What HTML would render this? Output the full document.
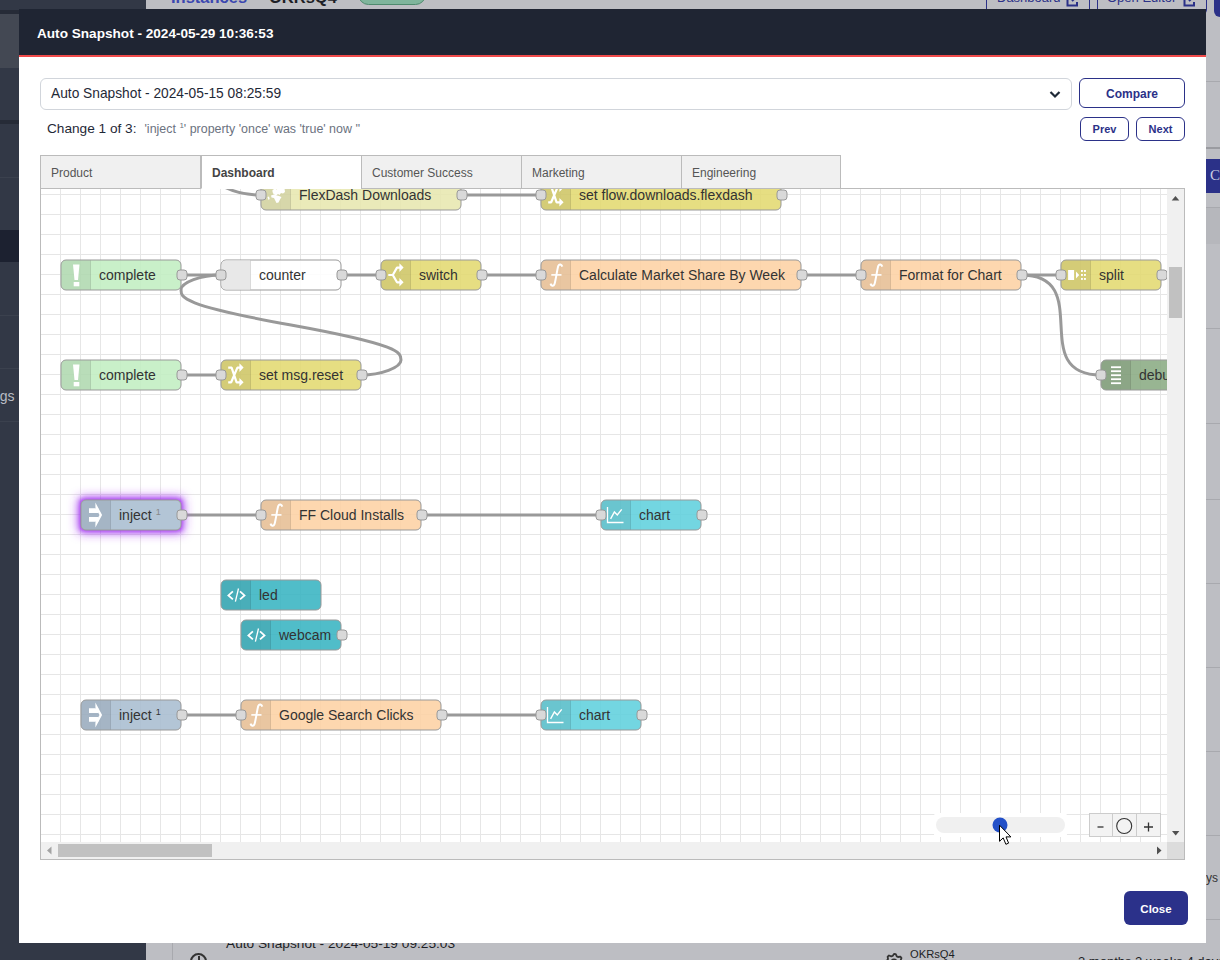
<!DOCTYPE html>
<html><head><meta charset="utf-8">
<style>
html,body{margin:0;padding:0;}
body{width:1220px;height:960px;overflow:hidden;position:relative;background:#bdbec3;font-family:"Liberation Sans",sans-serif;}
.a{position:absolute;}
.nw{white-space:nowrap;}
.btn{position:absolute;box-sizing:border-box;border:1px solid #2b3188;border-radius:6px;background:#fff;color:#2b3188;font-weight:bold;text-align:center;}
.tab{position:absolute;top:155px;height:34px;box-sizing:border-box;width:161px;border:1px solid #bbb;background:#f0f0f0;color:#555;font-size:12px;padding-left:10px;line-height:34px;}
</style></head><body>

<!-- ===== background page (dimmed) ===== -->
<!-- sidebar -->
<div class="a" style="left:0;top:0;width:146px;height:960px;background:#323846;"></div>
<div class="a" style="left:0;top:10px;width:146px;height:4px;background:#262b37;"></div>
<div class="a" style="left:0;top:14px;width:146px;height:54px;background:#434853;"></div>
<div class="a" style="left:0;top:120px;width:146px;height:4px;background:#262b37;"></div>
<div class="a" style="left:0;top:177px;width:146px;height:1px;background:#3b414e;"></div>
<div class="a" style="left:0;top:230px;width:146px;height:32px;background:#1c2130;"></div>
<div class="a" style="left:0;top:315px;width:146px;height:1px;background:#3b414e;"></div>
<div class="a" style="left:0;top:368px;width:146px;height:1px;background:#3b414e;"></div>
<div class="a" style="left:0;top:421px;width:146px;height:1px;background:#3b414e;"></div>
<div class="a nw" style="left:-36px;top:388px;font-size:14px;color:#b9bcc4;">Settings</div>

<!-- top strip -->
<div class="a nw" style="left:171px;top:-12px;font-size:16.5px;font-weight:bold;color:#3a47b0;">Instances</div>
<div class="a nw" style="left:269px;top:-12px;font-size:16.5px;font-weight:bold;color:#1d1f26;">OKRsQ4</div>
<div class="a" style="left:358px;top:-16px;width:68px;height:21px;border-radius:11px;background:#7fb59c;border:1px solid #4f8a6e;box-sizing:border-box;"></div>
<div class="a" style="left:986px;top:-20px;width:104px;height:40px;box-sizing:border-box;border:1px solid #2b3188;border-radius:4px;"></div>
<div class="a nw" style="left:997px;top:-10px;font-size:13px;color:#2b3188;">Dashboard</div>
<svg class="a" style="left:1066px;top:-6px" width="12" height="13"><path d="M5 1.5 H1.5 V11.5 H11 V8" fill="none" stroke="#2b3188" stroke-width="2"/><path d="M6 7 L11 2 M7.5 1.5 H11.5 V5" fill="none" stroke="#2b3188" stroke-width="2"/></svg>
<div class="a" style="left:1097px;top:-20px;width:110px;height:34px;box-sizing:border-box;border:1px solid #2b3188;border-radius:4px;"></div>
<div class="a nw" style="left:1107px;top:-10px;font-size:13px;color:#2b3188;">Open Editor</div>
<svg class="a" style="left:1183px;top:-6px" width="12" height="13"><path d="M5 1.5 H1.5 V11.5 H11 V8" fill="none" stroke="#2b3188" stroke-width="2"/><path d="M6 7 L11 2 M7.5 1.5 H11.5 V5" fill="none" stroke="#2b3188" stroke-width="2"/></svg>
<div class="a" style="left:1214px;top:-10px;width:20px;height:26.5px;border-radius:6px;background:#2b3188;"></div>

<!-- right strip -->
<div class="a" style="left:1206px;top:81px;width:14px;height:1px;background:#a8a9ae;"></div>
<div class="a" style="left:1206px;top:147px;width:14px;height:2px;background:#9a9ba0;"></div>
<div class="a" style="left:1206px;top:159px;width:14px;height:34px;background:#2b3188;"></div>
<div class="a nw" style="left:1210px;top:167px;font-size:15px;font-family:'Liberation Serif',serif;color:#c9cce0;">C</div>
<div class="a" style="left:1206px;top:207px;width:14px;height:36px;background:#b6b7bc;border-top:1px solid #a8a9ae;"></div>
<div class="a" style="left:1206px;top:328px;width:14px;height:1px;background:#a8a9ae;"></div>
<div class="a" style="left:1206px;top:423px;width:14px;height:1px;background:#a8a9ae;"></div>
<div class="a" style="left:1206px;top:919px;width:14px;height:1px;background:#a8a9ae;"></div>
<div class="a nw" style="left:1206px;top:870.5px;font-size:12px;color:#333;">ys</div>
<div class="a" style="left:1206px;top:499px;width:14px;height:1px;background:#a8a9ae;"></div>
<div class="a" style="left:1206px;top:583px;width:14px;height:1px;background:#a8a9ae;"></div>
<div class="a" style="left:1206px;top:667px;width:14px;height:1px;background:#a8a9ae;"></div>
<div class="a" style="left:1206px;top:751px;width:14px;height:1px;background:#a8a9ae;"></div>
<div class="a" style="left:1206px;top:835px;width:14px;height:1px;background:#a8a9ae;"></div>


<!-- bottom strip -->
<div class="a" style="left:172px;top:943px;width:1px;height:17px;background:#a8a9ae;"></div>
<div class="a nw" style="left:226px;top:935.5px;font-size:13.7px;color:#1d1f26;">Auto Snapshot - 2024-05-19 09:25:03</div>
<div class="a" style="left:190px;top:953px;width:17px;height:17px;border-radius:50%;border:2px solid #333;box-sizing:border-box;"></div>
<div class="a" style="left:197.5px;top:956px;width:2px;height:5px;background:#333;"></div>
<div class="a nw" style="left:910px;top:948px;font-size:11.2px;color:#1d1f26;">OKRsQ4</div>
<svg class="a" style="left:884px;top:953px" width="20" height="20"><path d="M10.00 1.00 L11.76 1.17 L12.76 3.35 L14.00 4.01 L16.36 3.64 L17.48 5.00 L16.65 7.24 L17.06 8.60 L19.00 10.00 L18.83 11.76 L16.65 12.76 L15.99 14.00 L16.36 16.36 L15.00 17.48 L12.76 16.65 L11.40 17.06 L10.00 19.00 L8.24 18.83 L7.24 16.65 L6.00 15.99 L3.64 16.36 L2.52 15.00 L3.35 12.76 L2.94 11.40 L1.00 10.00 L1.17 8.24 L3.35 7.24 L4.01 6.00 L3.64 3.64 L5.00 2.52 L7.24 3.35 L8.60 2.94 Z" fill="none" stroke="#333" stroke-width="1.8" stroke-linejoin="round"/><circle cx="10" cy="10" r="3.5" fill="none" stroke="#333" stroke-width="1.8"/></svg>
<div class="a nw" style="left:1078px;top:954px;font-size:13px;color:#1d1f26;">3 months 2 weeks 4 days</div>

<!-- ===== modal ===== -->
<div class="a" style="left:19px;top:9px;width:1187px;height:934px;background:#fff;"></div>
<div class="a" style="left:19px;top:9px;width:1187px;height:46px;background:#1f2533;border-bottom:2px solid #f04a4a;"></div>
<div class="a nw" style="left:37px;top:25.5px;font-size:13.6px;font-weight:bold;color:#fff;">Auto Snapshot - 2024-05-29 10:36:53</div>

<!-- select -->
<div class="a" style="left:40px;top:78px;width:1032px;height:32px;box-sizing:border-box;border:1px solid #d1d5db;border-radius:6px;"></div>
<div class="a nw" style="left:51px;top:86px;font-size:13.75px;color:#1f2937;">Auto Snapshot - 2024-05-15 08:25:59</div>
<svg class="a" style="left:1046px;top:88px;" width="18" height="14" viewBox="0 0 18 14"><path d="M4.5 4 L9 8.5 L13.5 4" fill="none" stroke="#1f2937" stroke-width="2.2"/></svg>

<!-- buttons -->
<div class="btn" style="left:1079px;top:78px;width:106px;height:30px;font-size:12px;line-height:30px;">Compare</div>
<div class="btn" style="left:1080px;top:117px;width:49px;height:24px;font-size:11px;line-height:22px;">Prev</div>
<div class="btn" style="left:1136px;top:117px;width:49px;height:24px;font-size:11px;line-height:22px;">Next</div>

<!-- change line -->
<div class="a nw" style="left:47px;top:121px;font-size:13.65px;color:#1f2937;">Change 1 of 3:</div>
<div class="a nw" style="left:144.5px;top:122px;font-size:12.45px;color:#6b7280;">'inject <sup style="font-size:8px;vertical-align:5px;line-height:0">1</sup>' property 'once' was 'true' now ''</div>

<!-- close -->
<div class="a" style="left:1124px;top:891px;width:64px;height:34px;border-radius:6px;background:#2b318a;color:#fff;font-weight:bold;font-size:11.5px;text-align:center;line-height:37px;">Close</div>

<!-- ===== canvas ===== -->
<div class="a" style="left:40px;top:188px;width:1145px;height:672px;box-sizing:border-box;border:1px solid #bbb;background:#fff;"></div>

<svg class="a" style="left:0;top:0" width="1220" height="960" viewBox="0 0 1220 960">
<defs>
<clipPath id="cv"><rect x="41" y="189" width="1126" height="653"/></clipPath>
<filter id="glow" x="-50%" y="-100%" width="200%" height="300%"><feGaussianBlur stdDeviation="5.5"/></filter><filter id="glow2" x="-50%" y="-100%" width="200%" height="300%"><feGaussianBlur stdDeviation="2"/></filter>
</defs>
<g clip-path="url(#cv)">
<path d="M60.5 189V842M80.5 189V842M100.5 189V842M120.5 189V842M140.5 189V842M160.5 189V842M180.5 189V842M200.5 189V842M220.5 189V842M240.5 189V842M260.5 189V842M280.5 189V842M300.5 189V842M320.5 189V842M340.5 189V842M360.5 189V842M380.5 189V842M400.5 189V842M420.5 189V842M440.5 189V842M460.5 189V842M480.5 189V842M500.5 189V842M520.5 189V842M540.5 189V842M560.5 189V842M580.5 189V842M600.5 189V842M620.5 189V842M640.5 189V842M660.5 189V842M680.5 189V842M700.5 189V842M720.5 189V842M740.5 189V842M760.5 189V842M780.5 189V842M800.5 189V842M820.5 189V842M840.5 189V842M860.5 189V842M880.5 189V842M900.5 189V842M920.5 189V842M940.5 189V842M960.5 189V842M980.5 189V842M1000.5 189V842M1020.5 189V842M1040.5 189V842M1060.5 189V842M1080.5 189V842M1100.5 189V842M1120.5 189V842M1140.5 189V842M1160.5 189V842M41 194.5H1167M41 214.5H1167M41 234.5H1167M41 254.5H1167M41 274.5H1167M41 294.5H1167M41 314.5H1167M41 334.5H1167M41 354.5H1167M41 374.5H1167M41 394.5H1167M41 414.5H1167M41 434.5H1167M41 454.5H1167M41 474.5H1167M41 494.5H1167M41 514.5H1167M41 534.5H1167M41 554.5H1167M41 574.5H1167M41 594.5H1167M41 614.5H1167M41 634.5H1167M41 654.5H1167M41 674.5H1167M41 694.5H1167M41 714.5H1167M41 734.5H1167M41 754.5H1167M41 774.5H1167M41 794.5H1167M41 814.5H1167M41 834.5H1167" stroke="#e6e6e6" stroke-width="1" fill="none"/>
<path d="M 461 195 C 521.0 195 481.0 195 541 195" fill="none" stroke="#999" stroke-width="3"/>
<path d="M 181 275 C 211.0 275 191.0 275 221 275" fill="none" stroke="#999" stroke-width="3"/>
<path d="M 341 275 C 371.0 275 351.0 275 381 275" fill="none" stroke="#999" stroke-width="3"/>
<path d="M 481 275 C 526.0 275 496.0 275 541 275" fill="none" stroke="#999" stroke-width="3"/>
<path d="M 801 275 C 846.0 275 816.0 275 861 275" fill="none" stroke="#999" stroke-width="3"/>
<path d="M 1021 275 C 1051.0 275 1031.0 275 1061 275" fill="none" stroke="#999" stroke-width="3"/>
<path d="M 1021 275 C 1096.0 275 1026.0 375 1101 375" fill="none" stroke="#999" stroke-width="3"/>
<path d="M 181 375 C 211.0 375 191.0 375 221 375" fill="none" stroke="#999" stroke-width="3"/>
<path d="M 361 375 C 381.0 375 401.0 367.5 401.0 360.0 S 401.0 345.0 291 325 S 181.0 297.5 181.0 290.0 S 201.0 275 221 275" fill="none" stroke="#999" stroke-width="3"/>
<path d="M 181 515 C 241.0 515 201.0 515 261 515" fill="none" stroke="#999" stroke-width="3"/>
<path d="M 421 515 C 496.0 515 526.0 515 601 515" fill="none" stroke="#999" stroke-width="3"/>
<path d="M 181 715 C 226.0 715 196.0 715 241 715" fill="none" stroke="#999" stroke-width="3"/>
<path d="M 441 715 C 516.0 715 466.0 715 541 715" fill="none" stroke="#999" stroke-width="3"/>
<path d="M 120 120 C 195.0 120 186.0 195 261 195" fill="none" stroke="#999" stroke-width="3"/>
<g transform="translate(261,180)"><rect x="0" y="0" width="200" height="30" rx="5" fill="#e7e7ae" fill-opacity="0.86" stroke="#999" stroke-width="1"/><path d="M5 0.5 H29.5 V29.5 H5 A4.5 4.5 0 0 1 0.5 25 V5 A4.5 4.5 0 0 1 5 0.5 Z" fill="rgba(0,0,0,0.08)"/><path d="M29.5 0.5 V29.5" stroke="rgba(0,0,0,0.1)" stroke-width="1"/><path d="M11.5 10 L14 8.5 L15.5 9.5 L17 8.5 L18 6 L21 7 L23.5 8.5 L24 12 L22 13.5 L20 13 L18.5 15 L17 14 L15 15.5 L12.5 14 L11.5 12 Z" fill="#fff"/><path d="M10 15.5 L13 14.5 L16 15.5 L18 16 L20.5 17 L19 19.5 L17.5 22.5 L15.5 23 L14 20 L13 18 L10.5 17.5 Z" fill="#fff"/><path d="M6.5 17 L8 16.5 L8.7 19 L7.5 20 Z" fill="#fff"/><text x="38" y="20" font-family="Liberation Sans" font-size="14" fill="#333">FlexDash Downloads</text><rect x="-5" y="10" width="10" height="10" rx="3" fill="#d9d9d9" stroke="#999" stroke-width="1"/><rect x="196" y="10" width="10" height="10" rx="3" fill="#d9d9d9" stroke="#999" stroke-width="1"/></g>
<g transform="translate(541,180)"><rect x="0" y="0" width="240" height="30" rx="5" fill="#e2d96e" fill-opacity="0.86" stroke="#999" stroke-width="1"/><path d="M5 0.5 H29.5 V29.5 H5 A4.5 4.5 0 0 1 0.5 25 V5 A4.5 4.5 0 0 1 5 0.5 Z" fill="rgba(0,0,0,0.08)"/><path d="M29.5 0.5 V29.5" stroke="rgba(0,0,0,0.1)" stroke-width="1"/><path d="M7.2 7.6 H10.6 L15.6 22.3 H19.5 M7.2 22.3 H10.2 L16.4 7.6 H19.5" fill="none" stroke="#fff" stroke-width="2.2" stroke-linejoin="bevel"/><path d="M18.4 3.3 L22.6 7.6 L18.4 11.9 Z M18.4 18 L22.6 22.3 L18.4 26.6 Z" fill="#fff"/><text x="38" y="20" font-family="Liberation Sans" font-size="14" fill="#333">set flow.downloads.flexdash</text><rect x="-5" y="10" width="10" height="10" rx="3" fill="#d9d9d9" stroke="#999" stroke-width="1"/><rect x="236" y="10" width="10" height="10" rx="3" fill="#d9d9d9" stroke="#999" stroke-width="1"/></g>
<g transform="translate(61,260)"><rect x="0" y="0" width="120" height="30" rx="5" fill="#c0edc0" fill-opacity="0.86" stroke="#999" stroke-width="1"/><path d="M5 0.5 H29.5 V29.5 H5 A4.5 4.5 0 0 1 0.5 25 V5 A4.5 4.5 0 0 1 5 0.5 Z" fill="rgba(0,0,0,0.08)"/><path d="M29.5 0.5 V29.5" stroke="rgba(0,0,0,0.1)" stroke-width="1"/><path d="M12 4.5 H18.5 L17 20 H13.5 Z" fill="#fff"/><rect x="12.7" y="22" width="5.6" height="4.3" fill="#fff"/><text x="38" y="20" font-family="Liberation Sans" font-size="14" fill="#333">complete</text><rect x="116" y="10" width="10" height="10" rx="3" fill="#d9d9d9" stroke="#999" stroke-width="1"/></g>
<g transform="translate(221,260)"><rect x="0" y="0" width="120" height="30" rx="5" fill="#ffffff" fill-opacity="0.86" stroke="#999" stroke-width="1"/><path d="M5 0.5 H29.5 V29.5 H5 A4.5 4.5 0 0 1 0.5 25 V5 A4.5 4.5 0 0 1 5 0.5 Z" fill="#e8e8e8"/><path d="M29.5 0.5 V29.5" stroke="rgba(0,0,0,0.1)" stroke-width="1"/><text x="38" y="20" font-family="Liberation Sans" font-size="14" fill="#333">counter</text><rect x="-5" y="10" width="10" height="10" rx="3" fill="#d9d9d9" stroke="#999" stroke-width="1"/><rect x="116" y="10" width="10" height="10" rx="3" fill="#d9d9d9" stroke="#999" stroke-width="1"/></g>
<g transform="translate(381,260)"><rect x="0" y="0" width="100" height="30" rx="5" fill="#e2d96e" fill-opacity="0.86" stroke="#999" stroke-width="1"/><path d="M5 0.5 H29.5 V29.5 H5 A4.5 4.5 0 0 1 0.5 25 V5 A4.5 4.5 0 0 1 5 0.5 Z" fill="rgba(0,0,0,0.08)"/><path d="M29.5 0.5 V29.5" stroke="rgba(0,0,0,0.1)" stroke-width="1"/><path d="M7.3 15 H11.8 L16 7.6 H19.5 M11.8 15 L16 22.3 H19.5" fill="none" stroke="#fff" stroke-width="2.2" stroke-linejoin="bevel"/><path d="M18.4 3.3 L22.6 7.6 L18.4 11.9 Z M18.4 18 L22.6 22.3 L18.4 26.6 Z" fill="#fff"/><text x="38" y="20" font-family="Liberation Sans" font-size="14" fill="#333">switch</text><rect x="-5" y="10" width="10" height="10" rx="3" fill="#d9d9d9" stroke="#999" stroke-width="1"/><rect x="96" y="10" width="10" height="10" rx="3" fill="#d9d9d9" stroke="#999" stroke-width="1"/></g>
<g transform="translate(541,260)"><rect x="0" y="0" width="260" height="30" rx="5" fill="#fdd0a2" fill-opacity="0.86" stroke="#999" stroke-width="1"/><path d="M5 0.5 H29.5 V29.5 H5 A4.5 4.5 0 0 1 0.5 25 V5 A4.5 4.5 0 0 1 5 0.5 Z" fill="rgba(0,0,0,0.08)"/><path d="M29.5 0.5 V29.5" stroke="rgba(0,0,0,0.1)" stroke-width="1"/><path d="M21.3 6.6 C20.6 4.2 18.3 3.6 17.3 5.8 C16.3 8.3 14.4 22.4 13.4 24.4 C12.5 26.6 10.2 26 9.5 23.6" fill="none" stroke="#fff" stroke-width="2"/><path d="M10.3 14.9 H20.5" stroke="#fff" stroke-width="1.6"/><text x="38" y="20" font-family="Liberation Sans" font-size="14" fill="#333">Calculate Market Share By Week</text><rect x="-5" y="10" width="10" height="10" rx="3" fill="#d9d9d9" stroke="#999" stroke-width="1"/><rect x="256" y="10" width="10" height="10" rx="3" fill="#d9d9d9" stroke="#999" stroke-width="1"/></g>
<g transform="translate(861,260)"><rect x="0" y="0" width="160" height="30" rx="5" fill="#fdd0a2" fill-opacity="0.86" stroke="#999" stroke-width="1"/><path d="M5 0.5 H29.5 V29.5 H5 A4.5 4.5 0 0 1 0.5 25 V5 A4.5 4.5 0 0 1 5 0.5 Z" fill="rgba(0,0,0,0.08)"/><path d="M29.5 0.5 V29.5" stroke="rgba(0,0,0,0.1)" stroke-width="1"/><path d="M21.3 6.6 C20.6 4.2 18.3 3.6 17.3 5.8 C16.3 8.3 14.4 22.4 13.4 24.4 C12.5 26.6 10.2 26 9.5 23.6" fill="none" stroke="#fff" stroke-width="2"/><path d="M10.3 14.9 H20.5" stroke="#fff" stroke-width="1.6"/><text x="38" y="20" font-family="Liberation Sans" font-size="14" fill="#333">Format for Chart</text><rect x="-5" y="10" width="10" height="10" rx="3" fill="#d9d9d9" stroke="#999" stroke-width="1"/><rect x="156" y="10" width="10" height="10" rx="3" fill="#d9d9d9" stroke="#999" stroke-width="1"/></g>
<g transform="translate(1061,260)"><rect x="0" y="0" width="100" height="30" rx="5" fill="#e2d96e" fill-opacity="0.86" stroke="#999" stroke-width="1"/><path d="M5 0.5 H29.5 V29.5 H5 A4.5 4.5 0 0 1 0.5 25 V5 A4.5 4.5 0 0 1 5 0.5 Z" fill="rgba(0,0,0,0.08)"/><path d="M29.5 0.5 V29.5" stroke="rgba(0,0,0,0.1)" stroke-width="1"/><rect x="7.1" y="10" width="6" height="10" fill="#fff"/><path d="M15 11.5 L18.2 15 L15 18.5 Z" fill="#fff"/><rect x="20" y="10" width="1.9" height="1.9" fill="#fff"/><rect x="20" y="14" width="1.9" height="1.9" fill="#fff"/><rect x="20" y="18" width="1.9" height="1.9" fill="#fff"/><rect x="23" y="10" width="1.9" height="1.9" fill="#fff"/><rect x="23" y="14" width="1.9" height="1.9" fill="#fff"/><rect x="23" y="18" width="1.9" height="1.9" fill="#fff"/><text x="38" y="20" font-family="Liberation Sans" font-size="14" fill="#333">split</text><rect x="-5" y="10" width="10" height="10" rx="3" fill="#d9d9d9" stroke="#999" stroke-width="1"/><rect x="96" y="10" width="10" height="10" rx="3" fill="#d9d9d9" stroke="#999" stroke-width="1"/></g>
<g transform="translate(61,360)"><rect x="0" y="0" width="120" height="30" rx="5" fill="#c0edc0" fill-opacity="0.86" stroke="#999" stroke-width="1"/><path d="M5 0.5 H29.5 V29.5 H5 A4.5 4.5 0 0 1 0.5 25 V5 A4.5 4.5 0 0 1 5 0.5 Z" fill="rgba(0,0,0,0.08)"/><path d="M29.5 0.5 V29.5" stroke="rgba(0,0,0,0.1)" stroke-width="1"/><path d="M12 4.5 H18.5 L17 20 H13.5 Z" fill="#fff"/><rect x="12.7" y="22" width="5.6" height="4.3" fill="#fff"/><text x="38" y="20" font-family="Liberation Sans" font-size="14" fill="#333">complete</text><rect x="116" y="10" width="10" height="10" rx="3" fill="#d9d9d9" stroke="#999" stroke-width="1"/></g>
<g transform="translate(221,360)"><rect x="0" y="0" width="140" height="30" rx="5" fill="#e2d96e" fill-opacity="0.86" stroke="#999" stroke-width="1"/><path d="M5 0.5 H29.5 V29.5 H5 A4.5 4.5 0 0 1 0.5 25 V5 A4.5 4.5 0 0 1 5 0.5 Z" fill="rgba(0,0,0,0.08)"/><path d="M29.5 0.5 V29.5" stroke="rgba(0,0,0,0.1)" stroke-width="1"/><path d="M7.2 7.6 H10.6 L15.6 22.3 H19.5 M7.2 22.3 H10.2 L16.4 7.6 H19.5" fill="none" stroke="#fff" stroke-width="2.2" stroke-linejoin="bevel"/><path d="M18.4 3.3 L22.6 7.6 L18.4 11.9 Z M18.4 18 L22.6 22.3 L18.4 26.6 Z" fill="#fff"/><text x="38" y="20" font-family="Liberation Sans" font-size="14" fill="#333">set msg.reset</text><rect x="-5" y="10" width="10" height="10" rx="3" fill="#d9d9d9" stroke="#999" stroke-width="1"/><rect x="136" y="10" width="10" height="10" rx="3" fill="#d9d9d9" stroke="#999" stroke-width="1"/></g>
<g transform="translate(1101,360)"><rect x="0" y="0" width="120" height="30" rx="5" fill="#87a980" fill-opacity="0.86" stroke="#999" stroke-width="1"/><path d="M5 0.5 H29.5 V29.5 H5 A4.5 4.5 0 0 1 0.5 25 V5 A4.5 4.5 0 0 1 5 0.5 Z" fill="rgba(0,0,0,0.08)"/><path d="M29.5 0.5 V29.5" stroke="rgba(0,0,0,0.1)" stroke-width="1"/><rect x="10" y="6.3" width="10" height="1.8" fill="#fff"/><rect x="10" y="10.299999999999999" width="10" height="1.8" fill="#fff"/><rect x="10" y="14.299999999999999" width="10" height="1.8" fill="#fff"/><rect x="10" y="18.3" width="10" height="1.8" fill="#fff"/><rect x="10" y="22.3" width="10" height="1.8" fill="#fff"/><text x="38" y="20" font-family="Liberation Sans" font-size="14" fill="#333">debug</text><rect x="-5" y="10" width="10" height="10" rx="3" fill="#d9d9d9" stroke="#999" stroke-width="1"/></g>
<g transform="translate(81,500)"><rect x="-2" y="-2" width="104" height="34" rx="2" fill="#a02ef0" filter="url(#glow)"/><rect x="-1" y="-1" width="102" height="32" rx="2" fill="#a02ef0" filter="url(#glow2)" opacity="0.75"/><rect x="0" y="0" width="100" height="30" rx="5" fill="#fff"/><rect x="0" y="0" width="100" height="30" rx="5" fill="#a6bbcf" fill-opacity="0.86" stroke="#999" stroke-width="1"/><path d="M5 0.5 H29.5 V29.5 H5 A4.5 4.5 0 0 1 0.5 25 V5 A4.5 4.5 0 0 1 5 0.5 Z" fill="rgba(0,0,0,0.08)"/><path d="M29.5 0.5 V29.5" stroke="rgba(0,0,0,0.1)" stroke-width="1"/><path d="M8 8.3 H17.3 V12.9 H8 Z M8 17.1 H17.3 V21.7 H8 Z" fill="#fff"/><path d="M14.4 2.6 L21.1 15 L14.4 27.4 L14.4 22.6 L18.5 15 L14.4 7.4 Z" fill="#fff"/><text x="38" y="20" font-family="Liberation Sans" font-size="14" fill="#333">inject<tspan font-size="9" dx="4" dy="-5" fill="#888">1</tspan></text><rect x="96" y="10" width="10" height="10" rx="3" fill="#d9d9d9" stroke="#999" stroke-width="1"/></g>
<g transform="translate(261,500)"><rect x="0" y="0" width="160" height="30" rx="5" fill="#fdd0a2" fill-opacity="0.86" stroke="#999" stroke-width="1"/><path d="M5 0.5 H29.5 V29.5 H5 A4.5 4.5 0 0 1 0.5 25 V5 A4.5 4.5 0 0 1 5 0.5 Z" fill="rgba(0,0,0,0.08)"/><path d="M29.5 0.5 V29.5" stroke="rgba(0,0,0,0.1)" stroke-width="1"/><path d="M21.3 6.6 C20.6 4.2 18.3 3.6 17.3 5.8 C16.3 8.3 14.4 22.4 13.4 24.4 C12.5 26.6 10.2 26 9.5 23.6" fill="none" stroke="#fff" stroke-width="2"/><path d="M10.3 14.9 H20.5" stroke="#fff" stroke-width="1.6"/><text x="38" y="20" font-family="Liberation Sans" font-size="14" fill="#333">FF Cloud Installs</text><rect x="-5" y="10" width="10" height="10" rx="3" fill="#d9d9d9" stroke="#999" stroke-width="1"/><rect x="156" y="10" width="10" height="10" rx="3" fill="#d9d9d9" stroke="#999" stroke-width="1"/></g>
<g transform="translate(601,500)"><rect x="0" y="0" width="100" height="30" rx="5" fill="#5ccfdc" fill-opacity="0.86" stroke="#999" stroke-width="1"/><path d="M5 0.5 H29.5 V29.5 H5 A4.5 4.5 0 0 1 0.5 25 V5 A4.5 4.5 0 0 1 5 0.5 Z" fill="rgba(0,0,0,0.08)"/><path d="M29.5 0.5 V29.5" stroke="rgba(0,0,0,0.1)" stroke-width="1"/><path d="M6.5 7 V22.5 H22.5" fill="none" stroke="#fff" stroke-width="1.3"/><path d="M9.6 18.8 L13.4 11.9 L16.3 15 L20.7 9.4" fill="none" stroke="#fff" stroke-width="1.4"/><text x="38" y="20" font-family="Liberation Sans" font-size="14" fill="#333">chart</text><rect x="-5" y="10" width="10" height="10" rx="3" fill="#d9d9d9" stroke="#999" stroke-width="1"/><rect x="96" y="10" width="10" height="10" rx="3" fill="#d9d9d9" stroke="#999" stroke-width="1"/></g>
<g transform="translate(221,580)"><rect x="0" y="0" width="100" height="30" rx="5" fill="#33b2c0" fill-opacity="0.86" stroke="#999" stroke-width="1"/><path d="M5 0.5 H29.5 V29.5 H5 A4.5 4.5 0 0 1 0.5 25 V5 A4.5 4.5 0 0 1 5 0.5 Z" fill="rgba(0,0,0,0.08)"/><path d="M29.5 0.5 V29.5" stroke="rgba(0,0,0,0.1)" stroke-width="1"/><path d="M11.9 11.4 L7.4 15.4 L11.9 19.4 M19 11.4 L23.5 15.4 L19 19.4" fill="none" stroke="#fff" stroke-width="1.8"/><path d="M17.5 8.5 L14.4 21.7" stroke="#fff" stroke-width="1.3"/><text x="38" y="20" font-family="Liberation Sans" font-size="14" fill="#333">led</text></g>
<g transform="translate(241,620)"><rect x="0" y="0" width="100" height="30" rx="5" fill="#33b2c0" fill-opacity="0.86" stroke="#999" stroke-width="1"/><path d="M5 0.5 H29.5 V29.5 H5 A4.5 4.5 0 0 1 0.5 25 V5 A4.5 4.5 0 0 1 5 0.5 Z" fill="rgba(0,0,0,0.08)"/><path d="M29.5 0.5 V29.5" stroke="rgba(0,0,0,0.1)" stroke-width="1"/><path d="M11.9 11.4 L7.4 15.4 L11.9 19.4 M19 11.4 L23.5 15.4 L19 19.4" fill="none" stroke="#fff" stroke-width="1.8"/><path d="M17.5 8.5 L14.4 21.7" stroke="#fff" stroke-width="1.3"/><text x="38" y="20" font-family="Liberation Sans" font-size="14" fill="#333">webcam</text><rect x="96" y="10" width="10" height="10" rx="3" fill="#d9d9d9" stroke="#999" stroke-width="1"/></g>
<g transform="translate(81,700)"><rect x="0" y="0" width="100" height="30" rx="5" fill="#a6bbcf" fill-opacity="0.86" stroke="#999" stroke-width="1"/><path d="M5 0.5 H29.5 V29.5 H5 A4.5 4.5 0 0 1 0.5 25 V5 A4.5 4.5 0 0 1 5 0.5 Z" fill="rgba(0,0,0,0.08)"/><path d="M29.5 0.5 V29.5" stroke="rgba(0,0,0,0.1)" stroke-width="1"/><path d="M8 8.3 H17.3 V12.9 H8 Z M8 17.1 H17.3 V21.7 H8 Z" fill="#fff"/><path d="M14.4 2.6 L21.1 15 L14.4 27.4 L14.4 22.6 L18.5 15 L14.4 7.4 Z" fill="#fff"/><text x="38" y="20" font-family="Liberation Sans" font-size="14" fill="#333">inject<tspan font-size="9" dx="4" dy="-5" fill="#333">1</tspan></text><rect x="96" y="10" width="10" height="10" rx="3" fill="#d9d9d9" stroke="#999" stroke-width="1"/></g>
<g transform="translate(241,700)"><rect x="0" y="0" width="200" height="30" rx="5" fill="#fdd0a2" fill-opacity="0.86" stroke="#999" stroke-width="1"/><path d="M5 0.5 H29.5 V29.5 H5 A4.5 4.5 0 0 1 0.5 25 V5 A4.5 4.5 0 0 1 5 0.5 Z" fill="rgba(0,0,0,0.08)"/><path d="M29.5 0.5 V29.5" stroke="rgba(0,0,0,0.1)" stroke-width="1"/><path d="M21.3 6.6 C20.6 4.2 18.3 3.6 17.3 5.8 C16.3 8.3 14.4 22.4 13.4 24.4 C12.5 26.6 10.2 26 9.5 23.6" fill="none" stroke="#fff" stroke-width="2"/><path d="M10.3 14.9 H20.5" stroke="#fff" stroke-width="1.6"/><text x="38" y="20" font-family="Liberation Sans" font-size="14" fill="#333">Google Search Clicks</text><rect x="-5" y="10" width="10" height="10" rx="3" fill="#d9d9d9" stroke="#999" stroke-width="1"/><rect x="196" y="10" width="10" height="10" rx="3" fill="#d9d9d9" stroke="#999" stroke-width="1"/></g>
<g transform="translate(541,700)"><rect x="0" y="0" width="100" height="30" rx="5" fill="#5ccfdc" fill-opacity="0.86" stroke="#999" stroke-width="1"/><path d="M5 0.5 H29.5 V29.5 H5 A4.5 4.5 0 0 1 0.5 25 V5 A4.5 4.5 0 0 1 5 0.5 Z" fill="rgba(0,0,0,0.08)"/><path d="M29.5 0.5 V29.5" stroke="rgba(0,0,0,0.1)" stroke-width="1"/><path d="M6.5 7 V22.5 H22.5" fill="none" stroke="#fff" stroke-width="1.3"/><path d="M9.6 18.8 L13.4 11.9 L16.3 15 L20.7 9.4" fill="none" stroke="#fff" stroke-width="1.4"/><text x="38" y="20" font-family="Liberation Sans" font-size="14" fill="#333">chart</text><rect x="-5" y="10" width="10" height="10" rx="3" fill="#d9d9d9" stroke="#999" stroke-width="1"/><rect x="96" y="10" width="10" height="10" rx="3" fill="#d9d9d9" stroke="#999" stroke-width="1"/></g>
</g>
<rect x="1167" y="189" width="17" height="653" fill="#f0f0f0"/>
<rect x="1169" y="267" width="13" height="51" fill="#c1c1c1"/>
<path d="M1171.7 200.5 L1175.5 196 L1179.3 200.5 Z" fill="#505050"/>
<path d="M1172 831 L1175.7 835.5 L1179.4 831 Z" fill="#505050"/>
<rect x="41" y="842" width="1126" height="17" fill="#f0f0f0"/>
<rect x="58" y="844" width="154" height="13" fill="#c1c1c1"/>
<path d="M51.5 846.5 L47 850.5 L51.5 854.5 Z" fill="#a3a3a3"/>
<path d="M1157 846.5 L1161.5 850.5 L1157 854.5 Z" fill="#505050"/>
<rect x="1167" y="842" width="17" height="17" fill="#dcdcdc"/>
<rect x="934" y="813" width="133" height="24" rx="3" fill="#fff"/>
<rect x="936" y="817" width="129" height="16" rx="8" fill="#f0f0f0"/>
<circle cx="1000" cy="825" r="7.5" fill="#2350c8"/>
<rect x="1089.5" y="813.5" width="71" height="23" fill="#f3f3f3" stroke="#ccc"/>
<path d="M1112.5 813.5 V836.5 M1136.5 813.5 V836.5" stroke="#ccc"/>
<path d="M1097.5 827 H1103.5" stroke="#333" stroke-width="1.3"/>
<circle cx="1124.2" cy="826" r="7.5" fill="none" stroke="#333" stroke-width="1.1"/>
<path d="M1144 827 H1153 M1148.5 822.5 V831.5" stroke="#333" stroke-width="1.3"/>
<path d="M999.5 825.2 L999.5 841.3 L1003.2 837.9 L1005.9 844.3 L1008.6 843.1 L1006 836.9 L1010.9 836.9 Z" fill="#fff" stroke="#000" stroke-width="1" stroke-linejoin="round"/>
</svg>
<!-- tabs -->
<div class="tab" style="left:40px;">Product</div>
<div class="tab" style="left:201px;background:#fff;border-bottom-color:#fff;font-weight:bold;color:#444;">Dashboard</div>
<div class="tab" style="left:361px;">Customer Success</div>
<div class="tab" style="left:521px;">Marketing</div>
<div class="tab" style="left:681px;width:160px;">Engineering</div>

</body></html>
